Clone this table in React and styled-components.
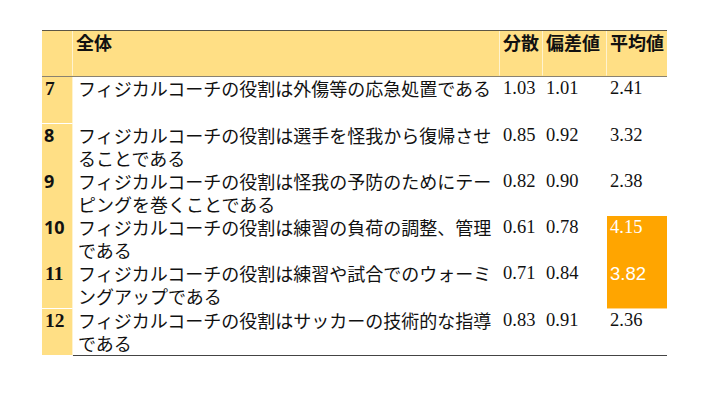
import styled, { createGlobalStyle } from "styled-components";

const GlobalStyle = createGlobalStyle`
    html, body {
        margin: 0;
        padding: 0;
        background-color: white;
    }
    * {
        box-sizing: border-box;
    }
`

const rows = [
    { no: "7", text: "フィジカルコーチの役割は外傷等の応急処置である", v: "1.03", sd: "1.01", avg: "2.41" },
    { no: "8", text: "フィジカルコーチの役割は選手を怪我から復帰させることである", v: "0.85", sd: "0.92", avg: "3.32", sans: true },
    { no: "9", text: "フィジカルコーチの役割は怪我の予防のためにテーピングを巻くことである", v: "0.82", sd: "0.90", avg: "2.38", sans: true },
    { no: "10", text: "フィジカルコーチの役割は練習の負荷の調整、管理である", v: "0.61", sd: "0.78", avg: "4.15", hot: true, sans: true },
    { no: "11", text: "フィジカルコーチの役割は練習や試合でのウォーミングアップである", v: "0.71", sd: "0.84", avg: "3.82", hot: true, avgSans: true },
    { no: "12", text: "フィジカルコーチの役割はサッカーの技術的な指導である", v: "0.83", sd: "0.91", avg: "2.36" },
];

export default function App(){
    return(
        <Page>
            <GlobalStyle />
            <Table>
                <Row head>
                    <Cell kind="no" />
                    <Cell kind="head">全体</Cell>
                    <Cell kind="head">分散</Cell>
                    <Cell kind="head">偏差値</Cell>
                    <Cell kind="head">平均値</Cell>
                </Row>
                {rows.map((r)=>(
                    <Row key={r.no}>
                        <NoCell sans={r.sans}>{r.no}</NoCell>
                        <Cell kind="text">{r.text}</Cell>
                        <Cell kind="num">{r.v}</Cell>
                        <Cell kind="num">{r.sd}</Cell>
                        <Cell kind={r.hot ? "hot" : "num"} sans={r.avgSans}>{r.avg}</Cell>
                    </Row>
                ))}
            </Table>
        </Page>
    );
}

const Page = styled.main`
    width: 720px;
    height: 405px;
    padding: 30px 0 0 42px;
    background-color: white;
`

const Table = styled.div`
    width: 625px;
    border-top: 1.5px solid #5c5645;
    border-bottom: 1.5px solid #444;
    display: flex;
    flex-direction: column;
`

const Row = styled.div`
    display: grid;
    grid-template-columns: 31px 427px 43px 64px 60px;
    height: 46.3px;
    border-bottom: ${(p) => p.head ? "1px solid #8a8270" : "none"};
    background-color: ${(p) => p.head ? "#ffdf85" : "white"};
`

const bgFor = (kind) => {
    if (kind === "hot") return "#ffa500";
    if (kind === "head" || kind === "no") return "#ffdf85";
    return "transparent";
}

const Cell = styled.div`
    background-color: ${(p) => bgFor(p.kind)};
    border-right: 1px solid ${(p) => p.kind === "head" || p.kind === "no" ? "#fff3cf" : "transparent"};
    border-bottom: 1px solid ${(p) => p.kind === "hot" ? "#ffd48a" : "transparent"};
    padding: 0 0 0 ${(p) => p.kind === "text" ? "5px" : "3px"};
    font-size: ${(p) => p.kind === "head" || p.kind === "text" ? "18px" : "18.5px"};
    line-height: 23px;
    color: ${(p) => p.kind === "hot" ? "white" : "#111"};
    font-weight: ${(p) => p.kind === "head" ? "bold" : "normal"};
    font-family: ${(p) => {
        if (p.kind === "head" || p.kind === "text") return `"Noto Sans CJK JP", sans-serif`;
        if (p.sans) return `"Liberation Sans", "Noto Sans CJK JP", sans-serif`;
        return `"Liberation Serif", "Noto Sans CJK JP", serif`;
    }};
    white-space: ${(p) => p.kind === "text" ? "normal" : "nowrap"};
    &:last-child {
        border-right: none;
    }
`

const NoCell = styled.div`
    background-color: #ffdf85;
    border-right: 1px solid #fff3cf;
    border-bottom: 1px solid white;
    padding-left: ${(p) => p.sans ? "2px" : "3px"};
    font-size: ${(p) => p.sans ? "18px" : "19.5px"};
    line-height: 23px;
    font-weight: bold;
    color: #111;
    white-space: nowrap;
    font-family: ${(p) => p.sans ? `"Noto Sans", "Liberation Sans", sans-serif` : `"Liberation Serif", serif`};
`
